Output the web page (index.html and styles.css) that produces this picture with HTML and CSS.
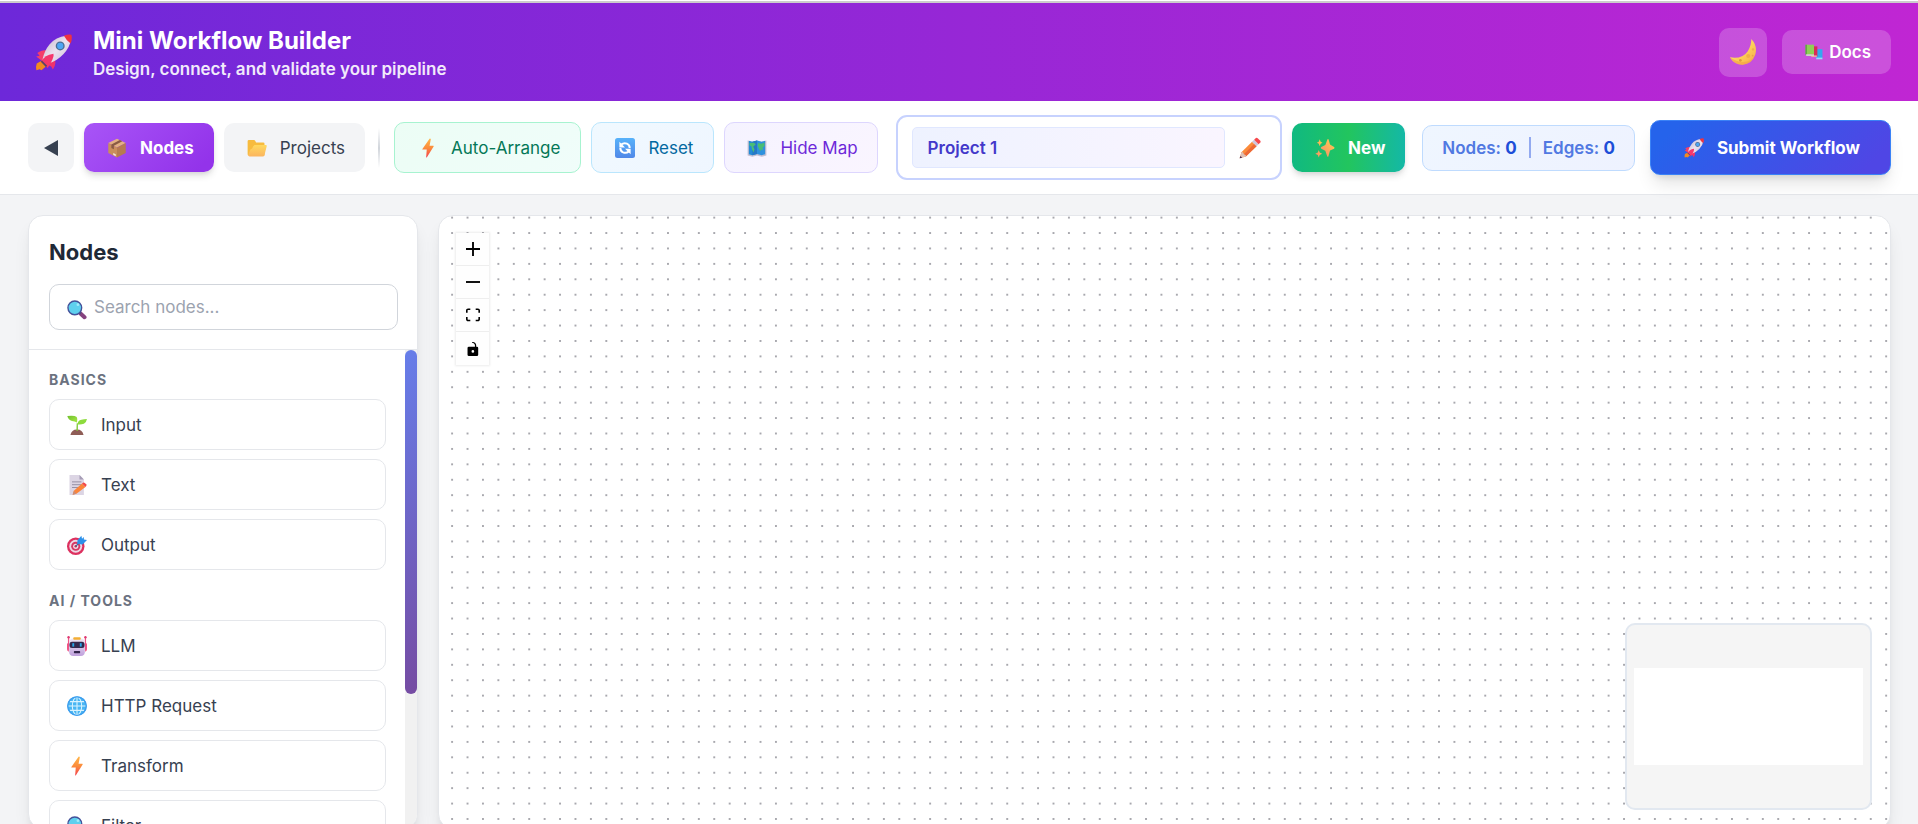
FILE: index.html
```html
<!DOCTYPE html>
<html lang="en">
<head>
<meta charset="utf-8">
<title>Mini Workflow Builder</title>
<link rel="stylesheet" href="styles.css">
</head>
<body>
<svg class="sprite" aria-hidden="true">
  <defs>
    <linearGradient id="g-bolt" x1="0" y1="0" x2="0" y2="1"><stop offset="0" stop-color="#ffb547"/><stop offset=".5" stop-color="#fb8c3c"/><stop offset="1" stop-color="#f4404e"/></linearGradient>
    <linearGradient id="g-rocket" x1="0" y1="0" x2="1" y2="1"><stop offset="0" stop-color="#bfb2c9"/><stop offset=".5" stop-color="#ece2ef"/><stop offset="1" stop-color="#c9b8d6"/></linearGradient>
    <linearGradient id="g-folder" x1="0" y1="0" x2="0" y2="1"><stop offset="0" stop-color="#ffd95e"/><stop offset="1" stop-color="#fbb55f"/></linearGradient>
    <linearGradient id="g-moon" x1="0" y1="0" x2="1" y2="1"><stop offset="0" stop-color="#fff07a"/><stop offset=".6" stop-color="#fccb55"/><stop offset="1" stop-color="#f6a54c"/></linearGradient>
    <linearGradient id="g-blue" x1="0" y1="0" x2="0" y2="1"><stop offset="0" stop-color="#57b2fa"/><stop offset="1" stop-color="#5088e8"/></linearGradient>
    <linearGradient id="g-spark" x1="1" y1="0" x2="0" y2="1"><stop offset="0" stop-color="#ffd04f"/><stop offset="1" stop-color="#f38a68"/></linearGradient>
    <linearGradient id="g-bot" x1="0" y1="0" x2="0" y2="1"><stop offset="0" stop-color="#f1e8f5"/><stop offset="1" stop-color="#bfa0dc"/></linearGradient>
    <linearGradient id="g-leaf" x1="0" y1="0" x2="1" y2="1"><stop offset="0" stop-color="#6fbf2e"/><stop offset="1" stop-color="#a9ea45"/></linearGradient>
  </defs>
  <symbol id="rocket" viewBox="0 0 32 32">
    <path d="M6 23 1.500 25.500Q.3 29 1.200 31.300L4 30.400 5.600 31.300 9.400 28Z" fill="#f28a1f"/>
    <path d="M2 16.500Q6 13.500 12 14L7 24 1 19.500 4 18.800Z" fill="#f43f6b"/>
    <path d="M16 19.500Q19.500 25 15.500 30.800L14 28 8.500 25Z" fill="#f0326b"/>
    <path d="M27 1.500Q18 2.500 12.500 9 8 14.500 6.500 22L10.500 26Q19 23.500 24.500 17.500 30.500 11 31 4.500Z" fill="url(#g-rocket)"/>
    <path d="M25 1.500Q29-.2 31.500.6 32.400 4 30.800 8.200 27 5.500 25 1.500Z" fill="#ef3340"/>
    <path d="M16 17Q17 20 11 29.500L5.500 24Q8 18 16 17Z" fill="#f5386c"/>
    <path d="M5.500 23.500 10 28" stroke="#5a4365" stroke-width="1.500"/>
    <circle cx="21.800" cy="10.300" r="3.900" fill="#4a6f95"/><circle cx="21.800" cy="10.300" r="2.700" fill="#4ea5f4"/>
  </symbol>
  <symbol id="moon" viewBox="0 0 32 32">
    <path d="M25.500 1Q33 9 30 19 26 29.500 15.500 30.500 6 30.500 1 22 15 24.500 21.500 15 25.500 8.500 25.500 1Z" fill="url(#g-moon)"/>
    <path d="M1 22Q6 30.500 15.500 30.500 26 29.500 30 19 26 27 16.500 27.500 8 27.500 1 22Z" fill="#f2a047" opacity=".6"/>
    <circle cx="22" cy="20.500" r="2.300" fill="#f0b147"/><circle cx="13" cy="25.500" r="1.500" fill="#e09a3e"/><circle cx="27.500" cy="13" r="1.400" fill="#f0b147"/><circle cx="27" cy="20" r="1" fill="#e9a345"/>
  </symbol>
  <symbol id="books" viewBox="0 0 32 32">
    <path d="M20 11h11v17H20z" fill="#35a7f0"/><path d="M20 26h11v3H20z" fill="#9bd8f5"/>
    <path d="M11 6h11v18H11z" fill="#d92b55"/><path d="M11 22h10v3H11z" fill="#f3a0a8"/>
    <path d="M1 3h15v17H1z" fill="#8fd055"/><path d="M1 3h2v18H1z" fill="#4b9a3d"/><path d="M2 20h14v3H2z" fill="#c9e3c0"/>
  </symbol>
  <symbol id="box" viewBox="0 0 32 32">
    <path d="M16 1 30 8 16 15 2 8Z" fill="#e3b083"/>
    <path d="M2 8 16 15V31L2 24Z" fill="#c98e5c"/><path d="M30 8 16 15V31L30 24Z" fill="#b77b50"/>
    <path d="M20.500 3 24.500 5 11 12.500V18L7 16V10.500Z" fill="#8a5a45"/>
    <path d="M10 24 14 26V29L10 27Z" fill="#f3e3dd"/>
  </symbol>
  <symbol id="folder" viewBox="0 0 32 32">
    <path d="M1 5Q1 3 3 3H11Q12.500 3 13.500 5L14.500 7H26Q28 7 28 9V28H3Q1 28 1 26Z" fill="#f7bb3e"/>
    <path d="M12 11H30Q32 11 31.500 13L28 27Q27.500 29.500 25 29.500H4Q1.500 29.500 2 27L5 19Q6 17 8 17 10 12 12 11Z" fill="url(#g-folder)"/>
  </symbol>
  <symbol id="bolt" viewBox="0 0 32 32"><path d="M18.500 1 7 17.500Q6.500 18.500 7.500 18.500H14L13 31Q14 31.500 14.500 30.500L25 13.500Q25.500 12.500 24.500 12.500H18.500L20.500 2Q20 .5 18.500 1Z" fill="url(#g-bolt)"/></symbol>
  <symbol id="refresh" viewBox="0 0 32 32">
    <rect width="32" height="32" rx="4" fill="url(#g-blue)"/>
    <g fill="none" stroke="#fff" stroke-width="3.200"><path d="M10 10.500Q14 7 19 9 23.500 11 23.500 16"/><path d="M22 21.500Q18 25 13 23 8.500 21 8.500 16"/></g>
    <path d="M7 6V15H16ZM25 26V17H16Z" fill="#fff"/>
  </symbol>
  <symbol id="map" viewBox="0 0 32 32">
    <path d="M1 4 8.500 6 16 4 23.500 6 31 4V28L23.500 30 16 28 8.500 30 1 28Z" fill="#c2bfd2"/>
    <path d="M3 4.500 8.500 6 16 4V25.500L8.500 27.500 3 26Z" fill="#238bd7"/><path d="M16 4 23.500 6 29 4.500V26L23.500 27.500 16 25.500Z" fill="#2e91de"/>
    <path d="M8.500 6 16 4V25.500L8.500 27.500Z" fill="#2678c5"/>
    <path d="M4 8 11 7.500 14 10 10 14 12 18 10.500 23 8 18 7 13 4 12ZM18 8 23 9 28 7V13L25 15 26 20 23 18 21 21 18.500 16 17 12Z" fill="#49bd76"/>
  </symbol>
  <symbol id="pencil" viewBox="0 0 32 32">
    <path d="M1 31 3.500 22 19 7 25.500 13.500 10 28.500Z" fill="#fb8b3b"/><path d="M7 25 22 10 25.500 13.500 10 28.500Z" fill="#ed6837"/>
    <path d="M1 31 3.500 22Q6 21 7 25 11 26 10 28.500Z" fill="#ddc1b8"/><path d="M1 31 2 27.500 4.700 30.200Z" fill="#4c2b50"/>
    <path d="M19 7 22 4 28.500 10.500 25.500 13.500Z" fill="#cfc6dc"/><path d="M22 4 24.500 1.500Q26 .5 27.500 2L31 5.500Q32 7 31 8L28.500 10.500Z" fill="#f6484d"/>
  </symbol>
  <symbol id="sparkles" viewBox="0 0 32 32" fill="url(#g-spark)">
    <path d="M20 2Q21.500 1 22 3L24 10.500 30.500 14.500Q32 16 30.500 17L24 20 21.500 29Q20.500 31 19.500 29L16.500 20.500 10 17Q8.500 15.500 10 14.500L16.500 11Z"/>
    <path d="M7.500 2 9 6 12 7.500 9 9 7.500 13 6 9 3 7.500 6 6ZM6 19 7.500 23 11.500 25 7.500 27 6 31 4.500 27 .5 25 4.500 23Z"/>
  </symbol>
  <symbol id="search" viewBox="0 0 32 32">
    <path d="M22 22 28 27.500" stroke="#85427f" stroke-width="6.500" stroke-linecap="round"/>
    <path d="M19 19 22 22" stroke="#4e4c7a" stroke-width="3"/>
    <circle cx="12.500" cy="12.500" r="11" fill="#5ed0ee" stroke="#44519a" stroke-width="2.200"/><circle cx="17.500" cy="7.500" r="2.200" fill="#a2eafa"/>
  </symbol>
  <symbol id="seedling" viewBox="0 0 32 32">
    <path d="M5.500 32Q7 23 16 23T26.500 32Z" fill="#8f5d56"/><path d="M15 25 15.500 13H17.500L17.500 25Z" fill="#82ca3d"/>
    <path d="M16 12Q12 10 8 9.500 2 8 .5 1.500 12 0 15.500 3 17.500 6 16 12Z" fill="url(#g-leaf)"/>
    <path d="M17 15Q17 8.500 23 7.500 27 7 32 6.500 31 12 27 14 22 16 17 15Z" fill="#8ddb3d"/>
  </symbol>
  <symbol id="memo" viewBox="0 0 32 32">
    <path d="M4 0H20L27 7V32H4Z" fill="#dcd5e4"/><path d="M20 0V7H27Z" fill="#a59cb5"/>
    <path d="M8 11H23M8 15.500H23M8 20H18" stroke="#9790a5" stroke-width="1.600"/>
    <path d="M9 31.500 11 25 24 13.500 29.500 19 15 30Z" fill="#fb853b"/><path d="M24 13.500 26 12Q28 11.500 31 15 32 17 29.500 19Z" fill="#f1494a"/><path d="M9 31.500 11 25 15 30Z" fill="#ca8c77"/>
  </symbol>
  <symbol id="target" viewBox="0 0 32 32">
    <circle cx="14" cy="18" r="14" fill="#dd315f"/><circle cx="14" cy="18" r="10.300" fill="#edd8e5"/><circle cx="14" cy="18" r="7.300" fill="#d73865"/><circle cx="14" cy="18" r="4.200" fill="#f2dce6"/><circle cx="14" cy="18" r="2" fill="#c92c58"/>
    <path d="M14 18 22 10" stroke="#436b9a" stroke-width="1.800"/><path d="M16 14 17 8 23 1 24 6 27 3V7L32 8 25 15Z" fill="#2d91ea"/>
  </symbol>
  <symbol id="robot" viewBox="0 0 32 32">
    <path d="M2.500 1V22M29.500 1V22" stroke="#f05486" stroke-width="2"/><path d="M0 13Q0 11 3 11V25Q0 24 0 21ZM32 13Q32 11 29 11V25Q32 24 32 21Z" fill="#f05486"/><circle cx="2.500" cy="2" r="1.900" fill="#de3c73"/><circle cx="29.500" cy="2" r="1.900" fill="#de3c73"/>
    <path d="M3.500 10Q4 4 10 4H22Q28 4 28.500 10V26Q28 32 22 32H10Q4 32 3.500 26Z" fill="url(#g-bot)"/><rect x="10" y="2" width="12" height="4" rx="1.500" fill="#f3ae34"/>
    <rect x="4" y="9" width="24" height="10" rx="4" fill="#33294f"/><rect x="8.500" y="11.500" width="3" height="5.500" fill="#28a7e8"/><rect x="20.500" y="11.500" width="3" height="5.500" fill="#28a7e8"/><rect x="11" y="24" width="10" height="3.500" rx="1" fill="#32244b"/>
  </symbol>
  <symbol id="globe" viewBox="0 0 32 32">
    <circle cx="16" cy="16" r="15.700" fill="#49b6f3"/>
    <g fill="none" stroke="#d9f3ff" stroke-width="1.700"><ellipse cx="16" cy="16" rx="7.500" ry="14"/><path d="M16 2V30M2 16H30M4.500 9H27.500M4.500 23H27.500"/></g>
    <circle cx="16" cy="16" r="14.800" fill="none" stroke="#3f9ded" stroke-width="2"/>
  </symbol>
</svg>

<header class="header">
  <svg class="header-logo"><use href="#rocket"/></svg>
  <div class="header-copy">
    <h1 class="header-title">Mini Workflow Builder</h1>
    <p class="header-subtitle">Design, connect, and validate your pipeline</p>
  </div>
  <button class="theme-button" aria-label="Switch to dark mode"><svg class="moon"><use href="#moon"/></svg></button>
  <button class="docs-button"><svg class="docs-icon"><use href="#books"/></svg>Docs</button>
</header>

<nav class="toolbar">
  <div class="group">
    <button class="back" aria-label="Collapse sidebar"><svg class="back-icon" viewBox="0 0 14 16"><path d="M14 0V16L0 8Z" fill="#374151"/></svg></button>
    <button class="btn btn-nodes"><svg class="icon"><use href="#box"/></svg>Nodes</button>
    <button class="btn btn-projects"><svg class="icon"><use href="#folder"/></svg>Projects</button>
  </div>
  <span class="divider"></span>
  <div class="group">
    <button class="btn outlined btn-arrange"><svg class="icon"><use href="#bolt"/></svg>Auto-Arrange</button>
    <button class="btn outlined btn-reset"><svg class="icon"><use href="#refresh"/></svg>Reset</button>
    <button class="btn outlined btn-map"><svg class="icon"><use href="#map"/></svg>Hide Map</button>
  </div>
  <div class="project-group">
    <div class="project">
      <input class="project-name" type="text" value="Project 1" aria-label="Project name">
      <button class="rename" aria-label="Rename project"><svg class="rename-icon"><use href="#pencil"/></svg></button>
    </div>
    <button class="btn btn-new"><svg class="icon"><use href="#sparkles"/></svg>New</button>
  </div>
  <div class="stats">
    <span>Nodes: <b class="count">0</b></span>
    <span class="stats-bar"></span>
    <span>Edges: <b class="count">0</b></span>
  </div>
  <button class="btn outlined btn-submit"><svg class="icon"><use href="#rocket"/></svg>Submit Workflow</button>
</nav>

<main class="workspace">
  <aside class="sidebar">
    <div class="sidebar-head">
      <h2 class="sidebar-title">Nodes</h2>
      <label class="search">
        <svg class="search-icon"><use href="#search"/></svg>
        <input class="search-input" type="text" placeholder="Search nodes..." aria-label="Search nodes">
      </label>
    </div>
    <div class="sidebar-body">
      <div class="node-list">
        <h3 class="list-title">BASICS</h3>
        <button class="node"><svg class="icon"><use href="#seedling"/></svg>Input</button>
        <button class="node"><svg class="icon"><use href="#memo"/></svg>Text</button>
        <button class="node"><svg class="icon"><use href="#target"/></svg>Output</button>
        <h3 class="list-title">AI / TOOLS</h3>
        <button class="node"><svg class="icon"><use href="#robot"/></svg>LLM</button>
        <button class="node"><svg class="icon"><use href="#globe"/></svg>HTTP Request</button>
        <button class="node"><svg class="icon"><use href="#bolt"/></svg>Transform</button>
        <button class="node"><svg class="icon"><use href="#search"/></svg>Filter</button>
      </div>
      <div class="scroll-track"><div class="scroll-thumb"></div></div>
    </div>
  </aside>

  <section class="canvas" aria-label="Workflow canvas">
    <svg class="dots" aria-hidden="true">
      <pattern id="dot-grid" x="5.400" y="-6.100" width="15.420" height="15.420" patternUnits="userSpaceOnUse"><circle cx="7.710" cy="7.710" r=".9" fill="#81818a"/></pattern>
      <rect width="100%" height="100%" fill="url(#dot-grid)"/>
    </svg>
    <div class="controls">
      <button class="control" aria-label="Zoom in"><svg class="control-icon" viewBox="0 0 32 32"><path d="M18.133 13.867V0h-4.266v13.867H0v4.266h13.867V32h4.266V18.133H32v-4.266z"/></svg></button>
      <button class="control" aria-label="Zoom out"><svg class="control-icon" viewBox="0 0 32 32"><path d="M0 13.867h32v4.266H0z"/></svg></button>
      <button class="control" aria-label="Fit view"><svg class="control-icon" viewBox="0 0 32 30"><path d="M3.692 4.630c0-.530.400-.938.939-.938h5.215V0H4.708C2.130 0 0 2.054 0 4.630v5.216h3.692V4.631zM27.354 0h-5.200v3.692h5.170c.530 0 .984.400.984.939v5.215H32V4.631A4.624 4.624 0 0 0 27.354 0zm.954 24.830c0 .532-.400.940-.939.940h-5.215v3.768h5.215c2.577 0 4.631-2.130 4.631-4.707v-5.139h-3.692v5.139zm-23.677.940c-.531 0-.939-.400-.939-.940v-5.138H0v5.139c0 2.577 2.130 4.707 4.708 4.707h5.138V25.770H4.631z"/></svg></button>
      <button class="control" aria-label="Toggle interactivity"><svg class="control-icon" viewBox="0 0 25 32"><path d="M21.333 10.667H19.810V7.619C19.810 3.429 16.380 0 12.190 0c-4.114 1.828-1.370 2.133.305 2.438 1.676.305 4.420 2.590 4.420 5.181v3.048H3.047A3.056 3.056 0 0 0 0 13.714v15.238A3.056 3.056 0 0 0 3.048 32h18.285a3.056 3.056 0 0 0 3.048-3.048V13.714a3.056 3.056 0 0 0-3.048-3.047zM12.190 24.533a3.056 3.056 0 0 1-3.047-3.047 3.056 3.056 0 0 1 3.047-3.048 3.056 3.056 0 0 1 3.048 3.048 3.056 3.056 0 0 1-3.048 3.047z"/></svg></button>
    </div>
    <div class="minimap"><div class="minimap-view"></div></div>
  </section>
</main>
</body>
</html>
```
FILE: styles.css
```css
* { box-sizing: border-box; }

html { height: 100%; overflow: hidden; }

/* The page runs a little past the window so the cards end below the fold. */
body {
  display: flex;
  flex-direction: column;
  height: calc(100vh + 28px);
  margin: 0;
  border-top: 1px solid #fff;
  background: #f3f4f6;
  color: #374151;
  font: 400 17px/24px Inter, "Liberation Sans", sans-serif;
}

h1, h2, h3, p { margin: 0; }

button, input { font: inherit; color: inherit; }

button {
  display: flex;
  align-items: center;
  justify-content: center;
  margin: 0;
  padding: 0;
  border: 0;
  background: none;
  white-space: nowrap;
}

.sprite { position: absolute; width: 0; height: 0; }

.icon { flex: none; width: 20px; height: 20px; margin: 0 3px; }

/* Header */
.header {
  display: flex;
  flex: none;
  align-items: center;
  height: 100px;
  padding: 0 27px 0 35px;
  border-top: 2px solid #ccc;
  background: linear-gradient(90deg, #6d28d9, #c026d3);
  background-origin: border-box;
  color: #fff;
}

.header-logo { width: 37px; height: 37px; margin-right: 21px; }
.header-copy { flex: 1; padding-top: 3px; }
.header-title { font-size: 24px; font-weight: 700; line-height: 30px; }
.header-subtitle { font-weight: 600; line-height: 26px; opacity: .9; }

.theme-button {
  width: 48px;
  height: 49px;
  margin-right: 15px;
  border-radius: 10px;
  background: rgba(255, 255, 255, .2);
}

.moon { width: 28px; height: 28px; }

.docs-button {
  gap: 6px;
  height: 44px;
  padding: 0 20px 0 23px;
  border-radius: 10px;
  background: rgba(255, 255, 255, .2);
  font-weight: 600;
}

.docs-icon { width: 18px; height: 18px; }

/* Toolbar */
.toolbar {
  display: flex;
  flex: none;
  align-items: center;
  height: 94px;
  padding: 0 27px 0 28px;
  border-bottom: 1px solid #e5e7eb;
  background: #fff;
}

.group { display: flex; flex: none; align-items: center; gap: 10px; }

.btn { flex: none; gap: 10px; height: 49px; padding: 0 20px; border-radius: 10px; }
.outlined { height: 51px; border: 1px solid; }

.back { width: 46px; height: 49px; border-radius: 10px; background: #f3f4f6; }
.back-icon { width: 14px; height: 16px; }

.btn-nodes {
  background: linear-gradient(135deg, #a855f7, #9333ea 90%);
  box-shadow: 0 5px 7px -1px rgba(0, 0, 0, .12), 0 2px 5px -2px rgba(0, 0, 0, .1);
  color: #fff;
  font-weight: 700;
}

.btn-projects { background: #f3f4f6; }

.divider {
  width: 2px;
  height: 40px;
  margin: 0 14px 0 13px;
  background: linear-gradient(transparent, #d1d5db, transparent);
}

.btn-arrange { border-color: #a7f3d0; background: linear-gradient(135deg, #ecfdf5, #f0fdfa); color: #047857; }
.btn-reset { border-color: #bae6fd; background: linear-gradient(135deg, #f0f9ff, #eff6ff); color: #0369a1; }
.btn-map { padding: 0 19px; border-color: #ddd6fe; background: linear-gradient(135deg, #f5f3ff, #faf5ff); color: #6d28d9; }

.project-group {
  display: flex;
  flex: 1;
  align-items: center;
  gap: 10px;
  min-width: 0;
  margin: 0 17px 0 18px;
}

.project {
  display: flex;
  flex: 1;
  align-items: center;
  gap: 14px;
  min-width: 0;
  height: 65px;
  padding: 0 19px 0 14px;
  border: 2px solid #c7d2fe;
  border-radius: 11px;
  background: #fff;
}

.project-name {
  flex: 1;
  min-width: 0;
  height: 41px;
  padding: 0 15px;
  border: 1px solid #e0e7ff;
  border-radius: 5px;
  background: linear-gradient(90deg, #eef2ff, #faf5ff);
  color: #4338ca;
  font-weight: 600;
}

.rename-icon { width: 22px; height: 22px; }

.btn-new {
  background: linear-gradient(90deg, #10b981, #22c55e 50%, #14b8a6);
  box-shadow: 0 5px 7px -1px rgba(0, 0, 0, .12), 0 2px 5px -2px rgba(0, 0, 0, .1);
  color: #fff;
  font-weight: 700;
}

.stats {
  display: flex;
  flex: none;
  align-items: center;
  gap: 12px;
  height: 46px;
  margin-right: 15px;
  padding: 0 19px;
  border: 1px solid #bfdbfe;
  border-radius: 10px;
  background: linear-gradient(135deg, #eff6ff, #eef2ff);
  color: #5179e2;
  font-weight: 600;
}

.count { color: #1d4ed8; font-weight: 700; }
.stats-bar { width: 2px; height: 21px; background: #93aaf0; }

.btn-submit {
  height: 55px;
  padding: 0 30px;
  border-color: #3b82f6;
  background: linear-gradient(135deg, #2563eb 10%, #4f46e5 90%);
  box-shadow: 0 12px 18px -4px rgba(0, 0, 0, .12), 0 5px 7px -4px rgba(0, 0, 0, .12);
  color: #fff;
  font-weight: 700;
}

/* Workspace */
.workspace {
  display: flex;
  flex: 1;
  gap: 20px;
  min-height: 0;
  padding: 20px 27px 23px 28px;
}

.sidebar,
.canvas {
  overflow: hidden;
  border: 1px solid #e5e7eb;
  border-radius: 15px;
  background: #fff;
  box-shadow: 0 12px 18px -4px rgba(0, 0, 0, .1), 0 5px 7px -4px rgba(0, 0, 0, .1);
}

.sidebar { display: flex; flex: none; flex-direction: column; width: 390px; }

.sidebar-head { padding: 20px 19px 19px 20px; border-bottom: 1px solid #e5e7eb; }
.sidebar-title { margin-bottom: 16px; color: #1f2937; font-size: 22px; font-weight: 700; line-height: 32px; }

.search {
  display: flex;
  align-items: center;
  gap: 7px;
  height: 46px;
  padding: 0 17px;
  border: 1px solid #d1d5db;
  border-radius: 10px;
}

.search-icon { flex: none; width: 20px; height: 20px; margin-top: 6px; }
.search-input { flex: 1; min-width: 0; padding: 0; border: 0; outline: 0; background: none; }
.search-input::placeholder { color: #9ca3af; opacity: 1; }

.sidebar-body { display: flex; flex: 1; min-height: 0; overflow: hidden; }

.node-list {
  display: flex;
  flex: 1;
  flex-direction: column;
  gap: 9px;
  padding: 20px 19px 0 20px;
  overflow: hidden;
}

.list-title {
  flex: none;
  color: #6b7280;
  font-size: 14px;
  font-weight: 700;
  line-height: 20px;
  letter-spacing: 1px;
}

.node + .list-title { margin-top: 12px; }

.node {
  flex: none;
  justify-content: flex-start;
  gap: 11px;
  height: 51px;
  padding: 0 14px;
  border: 1px solid #e5e7eb;
  border-radius: 10px;
}

.scroll-track { flex: none; width: 12px; background: #f1f1f1; }
.scroll-thumb { height: 72%; border-radius: 6px; background: linear-gradient(135deg, #667eea, #764ba2); }

.canvas { position: relative; flex: 1; min-width: 0; }
.dots { display: block; width: 100%; height: 100%; }

.controls {
  position: absolute;
  top: 17px;
  left: 17px;
  box-shadow: 0 0 2px 1px rgba(0, 0, 0, .08);
}

.control { width: 33px; height: 33px; border-bottom: 1px solid #eee; background: #fefefe; }
.control:last-child { border-bottom: 0; }
.control-icon { width: 14px; height: 14px; }

.minimap {
  position: absolute;
  right: 18px;
  bottom: 18px;
  display: flex;
  align-items: center;
  width: 247px;
  height: 187px;
  padding: 0 7px;
  border: 2px solid #e2e8f0;
  border-radius: 10px;
  background: #f5f5f5;
}

.minimap-view { flex: 1; height: 97px; background: #fff; }
```
